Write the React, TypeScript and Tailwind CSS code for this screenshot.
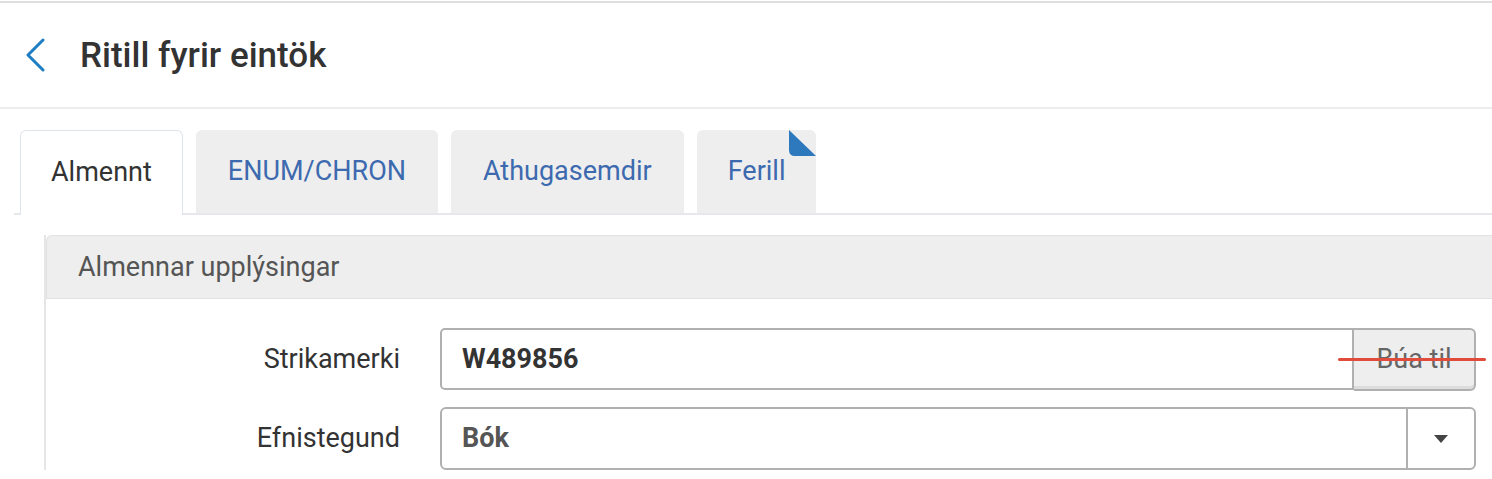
import React from "react";

export default function App() {
  return (
    <div
      className="relative w-[1492px] h-[479px] overflow-hidden bg-white"
      style={{ fontFamily: "Roboto, 'Liberation Sans', sans-serif" }}
    >
      <div className="mt-[1px] h-[2px] bg-[#dedede]" />
      {/* Header */}
      <div className="flex h-[106px] items-center border-b-2 border-[#ececec]">
        <div className="ml-[24px] flex w-[24px] items-center">
          <svg width="22" height="34" viewBox="0 0 22 34" fill="none">
            <path d="M19 2 L4 17 L19 32" stroke="#1f7dc4" strokeWidth="3" strokeLinecap="round" strokeLinejoin="round" />
          </svg>
        </div>
        <h1 className="ml-[32px] text-[35px] font-medium text-[#333333] leading-none">Ritill fyrir eintök</h1>
      </div>

      {/* Tabs */}
      <div className="ml-[14px] mt-[21px] flex items-end gap-[13px] border-b-2 border-[#e6e8ee] pl-[6px]">
        <div className="-mb-[2px] flex h-[85px] items-center rounded-t-[6px] border border-b-0 border-[#dfe3ea] bg-white px-[30px] pb-[2px] text-[27px] text-[#333333]">
          Almennt
        </div>
        <div className="flex h-[83px] items-center rounded-t-[6px] bg-[#eeeeee] px-[32px] text-[27px] text-[#3d6aae]">
          ENUM/CHRON
        </div>
        <div className="flex h-[83px] items-center rounded-t-[6px] bg-[#eeeeee] px-[32px] text-[27px] text-[#3d6aae]">
          Athugasemdir
        </div>
        <div className="relative flex h-[83px] items-center rounded-t-[6px] bg-[#eeeeee] px-[31px] text-[27px] text-[#3d6aae]">
          Ferill
          <svg className="absolute right-0 top-0" width="27" height="26" viewBox="0 0 27 26">
            <path d="M0 0 L27 26 L6 26 Q0 26 0 20 Z" fill="#2e78bd" />
          </svg>
        </div>
      </div>

      {/* Section */}
      <div className="ml-[44px] mt-[20px] border-l-2 border-[#e6e6e6]">
        <div className="flex h-[64px] items-center rounded-tl-[6px] border border-r-0 border-[#e2e2e2] bg-[#eeeeee] pl-[31px] text-[27px] text-[#555555]">
          Almennar upplýsingar
        </div>
        <div className="flex flex-col gap-[16px] pt-[29px] pr-[16px]">
          <div className="flex items-center">
            <div className="w-[354px] text-right text-[27px] text-[#333333]">Strikamerki</div>
            <div className="ml-[40px] flex flex-1">
              <div className="flex h-[62px] flex-1 items-center rounded-l-[5px] border-2 border-[#b0b0b0] pl-[20px] text-[27px] font-bold text-[#333333]">
                W489856
              </div>
              <div className="flex h-[63px] w-[122px] items-center justify-center rounded-r-[6px] border-2 border-l-0 border-[#b0b0b0] bg-[#eeeeee] text-[27px] text-[#666666] shadow-[inset_0_-3px_0_#dddddd]">
                Búa til
              </div>
            </div>
          </div>
          <div className="flex items-center">
            <div className="w-[354px] text-right text-[27px] text-[#333333]">Efnistegund</div>
            <div className="ml-[40px] flex h-[63px] flex-1 rounded-[6px] border-2 border-[#b0b0b0]">
              <div className="flex flex-1 items-center border-r-2 border-[#b0b0b0] pl-[20px] text-[27px] font-bold text-[#555555]">
                Bók
              </div>
              <div className="flex w-[66px] items-center justify-center">
                <svg width="14" height="8" viewBox="0 0 14 8">
                  <path d="M0 0 L14 0 L7 8 Z" fill="#444444" />
                </svg>
              </div>
            </div>
          </div>
        </div>
      </div>

      {/* red annotation line */}
      <div className="absolute left-[1338px] top-[358px] h-[3px] w-[148px] rounded-full bg-[#e14b3b]" />
    </div>
  );
}
